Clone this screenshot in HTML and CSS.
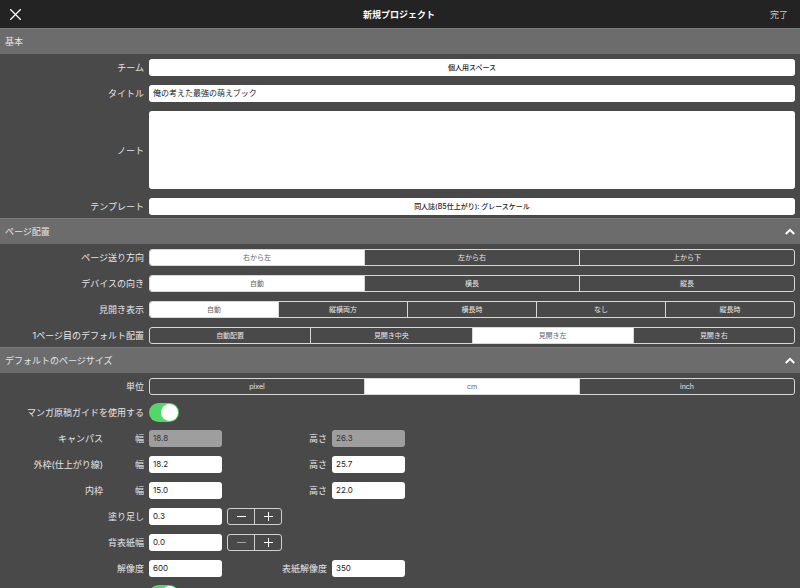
FILE: index.html
```html
<!DOCTYPE html>
<html lang="ja">
<head>
  <meta charset="UTF-8">
  <meta name="viewport" content="width=device-width, initial-scale=1.0">
  <title>新規プロジェクト</title>
  <link rel="stylesheet" href="styles.css">
</head>
<body>
  <header class="navbar">
    <button type="button" class="nav-close" aria-label="閉じる">
      <svg width="11" height="11" viewBox="0 0 11 11"><path d="M0.5 0.5L10.5 10.5M10.5 0.5L0.5 10.5" stroke="#fff" stroke-width="1.2" stroke-linecap="round"/></svg>
    </button>
    <h1>新規プロジェクト</h1>
    <button type="submit" form="projectForm" class="nav-done">完了</button>
  </header>

  <form class="content" id="projectForm">
    <!-- 基本 -->
    <div class="section-head"><h2>基本</h2></div>
    <div class="section-body">
      <div class="row">
        <label class="row-label" for="team">チーム</label>
        <select class="field picker" id="team"><option>個人用スペース</option></select>
      </div>
      <div class="row">
        <label class="row-label" for="title">タイトル</label>
        <input class="field" type="text" id="title" value="俺の考えた最強の萌えブック">
      </div>
      <div class="row">
        <label class="row-label" for="note">ノート</label>
        <textarea class="field note" id="note"></textarea>
      </div>
      <div class="row">
        <label class="row-label" for="template">テンプレート</label>
        <select class="field picker" id="template"><option>同人誌(B5仕上がり): グレースケール</option></select>
      </div>
    </div>

    <!-- ページ配置 -->
    <div class="section-head">
      <h2>ページ配置</h2>
      <button type="button" aria-label="ページ配置を閉じる">
        <svg width="10" height="7" viewBox="0 0 10 7"><path d="M0.8 6L5 1.8L9.2 6" fill="none" stroke="#fff" stroke-width="2"/></svg>
      </button>
    </div>
    <div class="section-body">
      <div class="row">
        <span class="row-label" id="dirLabel">ページ送り方向</span>
        <div class="segmented" role="radiogroup" aria-labelledby="dirLabel">
          <label><input type="radio" name="direction" checked>右から左</label>
          <label><input type="radio" name="direction">左から右</label>
          <label><input type="radio" name="direction">上から下</label>
        </div>
      </div>
      <div class="row">
        <span class="row-label" id="deviceLabel">デバイスの向き</span>
        <div class="segmented" role="radiogroup" aria-labelledby="deviceLabel">
          <label><input type="radio" name="device" checked>自動</label>
          <label><input type="radio" name="device">横長</label>
          <label><input type="radio" name="device">縦長</label>
        </div>
      </div>
      <div class="row">
        <span class="row-label" id="spreadLabel">見開き表示</span>
        <div class="segmented" role="radiogroup" aria-labelledby="spreadLabel">
          <label><input type="radio" name="spread" checked>自動</label>
          <label><input type="radio" name="spread">縦横両方</label>
          <label><input type="radio" name="spread">横長時</label>
          <label><input type="radio" name="spread">なし</label>
          <label><input type="radio" name="spread">縦長時</label>
        </div>
      </div>
      <div class="row">
        <span class="row-label" id="firstLabel">1ページ目のデフォルト配置</span>
        <div class="segmented" role="radiogroup" aria-labelledby="firstLabel">
          <label><input type="radio" name="first">自動配置</label>
          <label><input type="radio" name="first">見開き中央</label>
          <label><input type="radio" name="first" checked>見開き左</label>
          <label><input type="radio" name="first">見開き右</label>
        </div>
      </div>
    </div>

    <!-- デフォルトのページサイズ -->
    <div class="section-head">
      <h2>デフォルトのページサイズ</h2>
      <button type="button" aria-label="デフォルトのページサイズを閉じる">
        <svg width="10" height="7" viewBox="0 0 10 7"><path d="M0.8 6L5 1.8L9.2 6" fill="none" stroke="#fff" stroke-width="2"/></svg>
      </button>
    </div>
    <div class="section-body">
      <div class="row">
        <span class="row-label" id="unitLabel">単位</span>
        <div class="segmented" role="radiogroup" aria-labelledby="unitLabel">
          <label><input type="radio" name="unit">pixel</label>
          <label><input type="radio" name="unit" checked>cm</label>
          <label><input type="radio" name="unit">inch</label>
        </div>
      </div>
      <div class="row">
        <label class="row-label" for="guide">マンガ原稿ガイドを使用する</label>
        <input class="switch" type="checkbox" id="guide" checked>
      </div>
      <div class="row">
        <div class="row-label pair"><span>キャンパス</span><label for="canvasW">幅</label></div>
        <input class="field num" type="text" id="canvasW" value="18.8" disabled>
        <label class="second-label" for="canvasH">高さ</label>
        <input class="field num" type="text" id="canvasH" value="26.3" disabled>
      </div>
      <div class="row">
        <div class="row-label pair"><span>外枠(仕上がり線)</span><label for="outerW">幅</label></div>
        <input class="field num" type="text" id="outerW" value="18.2">
        <label class="second-label" for="outerH">高さ</label>
        <input class="field num" type="text" id="outerH" value="25.7">
      </div>
      <div class="row">
        <div class="row-label pair"><span>内枠</span><label for="innerW">幅</label></div>
        <input class="field num" type="text" id="innerW" value="15.0">
        <label class="second-label" for="innerH">高さ</label>
        <input class="field num" type="text" id="innerH" value="22.0">
      </div>
      <div class="row">
        <label class="row-label" for="bleed">塗り足し</label>
        <input class="field num" type="text" id="bleed" value="0.3">
        <div class="stepper">
          <button type="button" aria-label="減らす"><svg width="11" height="11" viewBox="0 0 11 11"><path d="M1 5.5H10" stroke="#fff"/></svg></button>
          <button type="button" aria-label="増やす"><svg width="11" height="11" viewBox="0 0 11 11"><path d="M1 5.5H10M5.5 1V10" stroke="#fff"/></svg></button>
        </div>
      </div>
      <div class="row">
        <label class="row-label" for="spine">背表紙幅</label>
        <input class="field num" type="text" id="spine" value="0.0">
        <div class="stepper">
          <button type="button" aria-label="減らす" disabled><svg width="11" height="11" viewBox="0 0 11 11"><path d="M1 5.5H10" stroke="#fff"/></svg></button>
          <button type="button" aria-label="増やす"><svg width="11" height="11" viewBox="0 0 11 11"><path d="M1 5.5H10M5.5 1V10" stroke="#fff"/></svg></button>
        </div>
      </div>
      <div class="row">
        <label class="row-label" for="dpi">解像度</label>
        <input class="field num" type="text" id="dpi" value="600">
        <label class="second-label" for="coverDpi">表紙解像度</label>
        <input class="field num" type="text" id="coverDpi" value="350">
      </div>
      <div class="row">
        <span class="row-label"></span>
        <input class="switch" type="checkbox" aria-label="表紙" checked>
      </div>
    </div>
  </form>
</body>
</html>
```
FILE: styles.css
```css
* {
  box-sizing: border-box;
}
body {
  margin: 0;
  height: 100vh;
  display: flex;
  flex-direction: column;
  background: #494949;
  color: #e6e6e6;
  font-family: Inter, "Noto Sans CJK JP", sans-serif;
  font-size: 9px;
  line-height: 17px;
}
button, input, select, textarea {
  margin: 0;
  font: inherit;
  color: inherit;
}
button {
  padding: 0;
  border: none;
  background: none;
  cursor: pointer;
}
svg {
  display: block;
}
h1, h2 {
  margin: 0;
  font-size: 9px;
}

/* Navigation bar */
.navbar {
  flex: none;
  display: grid;
  grid-template-columns: 1fr auto 1fr;
  align-items: center;
  height: 28px;
  padding: 0 12px 0 10px;
  background: #232323;
}
.navbar h1 {
  color: #fff;
  font-weight: bold;
}
.nav-close {
  justify-self: start;
}
.nav-done {
  justify-self: end;
  color: #c8c8c8;
}

/* Sections */
.content {
  flex: 1;
  min-height: 0;
  overflow-y: auto;
  scrollbar-width: none;
}
.section-head {
  display: flex;
  align-items: center;
  justify-content: space-between;
  height: 26px;
  padding: 0 5px;
  background: #6c6c6c;
  border-top: 1px solid #7a7a7a;
}
.section-head h2 {
  font-weight: normal;
}
.section-body {
  display: flex;
  flex-direction: column;
  gap: 9px;
  padding: 5px 5px 3px;
}
.row {
  display: flex;
  align-items: center;
  gap: 5px;
  min-height: 17px;
}
.row-label {
  flex: none;
  width: 139px;
  text-align: right;
}
.pair {
  display: flex;
  justify-content: flex-end;
}
.pair label {
  width: 41px;
}
.second-label {
  width: 100px;
  text-align: right;
}

/* Fields */
.field {
  flex: 1;
  min-width: 0;
  height: 17px;
  padding: 0 4px;
  border: none;
  border-radius: 3px;
  background: #fff;
  color: #222;
  font-size: 8px;
}
.picker {
  appearance: none;
  font-size: 7px;
  font-weight: 500;
  text-align: center;
  text-align-last: center;
}
.note {
  height: 78px;
  resize: none;
}
.num {
  flex: none;
  width: 73px;
}
.num:disabled {
  background: #9e9e9e;
  color: #333;
}

/* Segmented control */
.segmented {
  flex: 1;
  display: flex;
  height: 17px;
  border: 1px solid #d8d8d8;
  border-radius: 3px;
  overflow: hidden;
  font-size: 7px;
  line-height: 15px;
}
.segmented label {
  flex: 1 1 0;
  text-align: center;
  cursor: pointer;
}
.segmented label + label {
  border-left: 1px solid #d8d8d8;
}
.segmented label:has(:checked) {
  background: #fff;
  color: #666;
}
.segmented input {
  position: absolute;
  opacity: 0;
  pointer-events: none;
}

/* Switch */
.switch {
  appearance: none;
  display: flex;
  width: 30px;
  height: 19px;
  margin: -1px 0;
  padding: 1px;
  border-radius: 10px;
  background: #888;
}
.switch::before {
  content: "";
  width: 17px;
  height: 17px;
  border-radius: 50%;
  background: #fff;
}
.switch:checked {
  justify-content: flex-end;
  background: #53d769;
}

/* Stepper */
.stepper {
  display: flex;
  width: 55px;
  height: 17px;
  border: 1px solid #d0d0d0;
  border-radius: 3px;
}
.stepper button {
  flex: 1;
  display: flex;
  align-items: center;
  justify-content: center;
}
.stepper button + button {
  border-left: 1px solid #d0d0d0;
}
.stepper button:disabled svg {
  opacity: 0.5;
}
```
